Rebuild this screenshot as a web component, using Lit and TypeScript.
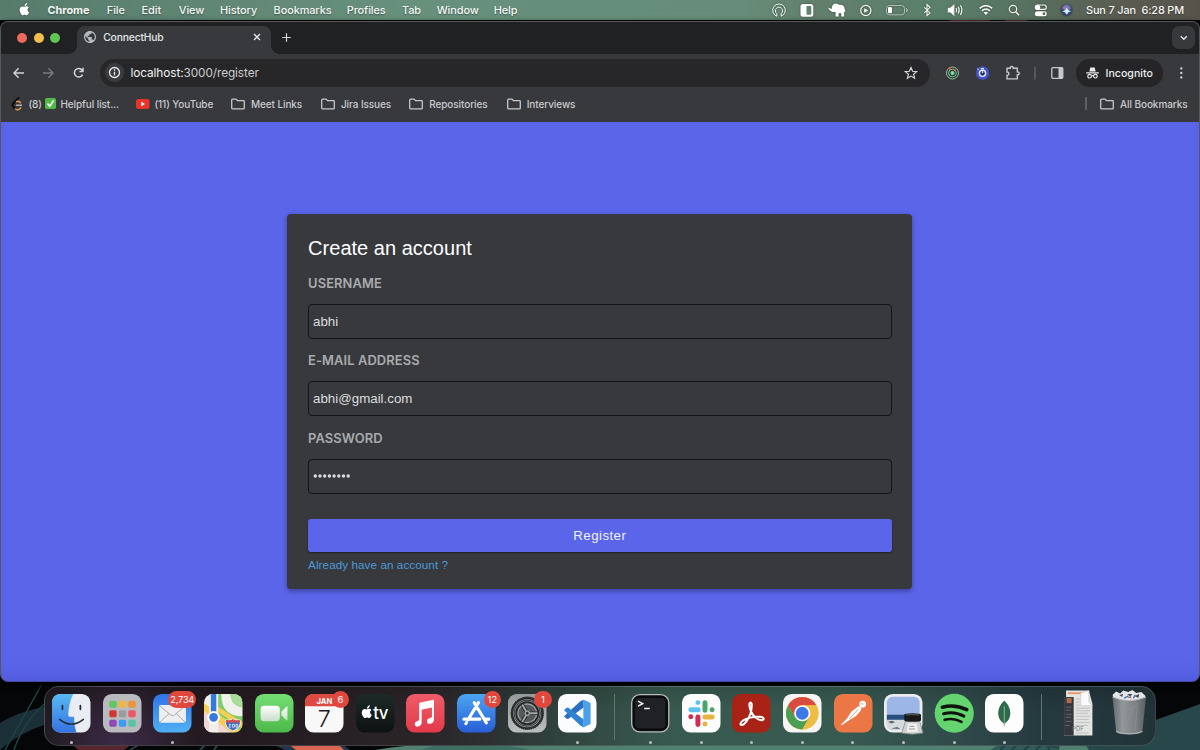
import { LitElement, html, svg, css, SVGTemplateResult } from "lit";
import { customElement, property } from "lit/decorators.js";

const APPLE =
  "M8.8 2.1c.6-.7 1-1.5.9-2.1-.8.1-1.6.5-2.1 1.1-.5.6-.9 1.400-.8 2.200.8 0 1.500-.5 2-1.200zM9.900 6.900c0-1.500 1.200-2.200 1.300-2.300-.7-1-1.800-1.200-2.200-1.200-.9-.1-1.800.6-2.300.6s-1.200-.5-2-.5c-1 0-2 .6-2.500 1.500-1.100 1.900-.3 4.600.8 6.100.5.7 1.100 1.600 1.900 1.500.8 0 1.100-.5 2-.5s1.200.5 2 .5 1.400-.7 1.900-1.500c.6-.8.8-1.700.8-1.700s-1.700-.6-1.700-2.500z";

const GLOBE =
  "M12 2C6.48 2 2 6.48 2 12s4.480 10 10 10 10-4.480 10-10S17.520 2 12 2zm-1 17.930c-3.950-.490-7-3.850-7-7.930 0-.620.080-1.210.210-1.790L9 15v1c0 1.100.900 2 2 2v1.930zm6.900-2.540c-.260-.810-1-1.390-1.900-1.390h-1v-3c0-.550-.450-1-1-1H8v-2h2c.550 0 1-.450 1-1V7h2c1.100 0 2-.900 2-2v-.410c2.930 1.190 5 4.060 5 7.410 0 2.080-.800 3.970-2.100 5.390z";

/* ---------- macOS menu bar ---------- */

@customElement("menu-bar")
export class MenuBar extends LitElement {
  static styles = css`
    :host {
      display: flex;
      justify-content: space-between;
      height: 20px;
      color: #f4f6f5;
      font: 500 10.900px/20px Inter, "Liberation Sans", sans-serif;
      letter-spacing: -0.08px;
      text-shadow: 0 0.5px 1.5px rgba(0, 0, 0, 0.4);
      background: linear-gradient(90deg, #577c6c 0, #5f8573 15%, #67917d 34%, #658d79 62%, #627f6c 68%, #5a806c 78%, #58705f 86%, #5b5a50 94%, #57534b 100%);
    }
    svg { display: block; overflow: visible; filter: drop-shadow(0 0.5px 1px rgba(0, 0, 0, 0.4)); }
    .menus { display: flex; padding-left: 17.5px; }
    .logo { width: 30px; padding-top: 2.5px; }
    .name { font-weight: 700; letter-spacing: -0.02px; }
    .w0 { width: 59.3px; }
    .w1 { width: 34.8px; }
    .w2 { width: 37.2px; }
    .w3 { width: 41.3px; }
    .w4 { width: 53.5px; }
    .w5 { width: 73.2px; }
    .w6 { width: 55.2px; }
    .w7 { width: 34.8px; }
    .w8 { width: 57px; }
    .status { display: flex; width: 429px; }
    .clock { white-space: pre; padding-left: 9px; letter-spacing: -0.14px; }
  `;
  render() {
    const menus = ["Chrome", "File", "Edit", "View", "History", "Bookmarks", "Profiles", "Tab", "Window", "Help"];
    return html`
      <div class="menus">
        <div class="logo">
          <svg width="13" height="14" viewBox="0 0 13.500 14.500"><path d=${APPLE} fill="#fff" /></svg>
        </div>
        ${menus.map((m, i) => html`<span class="w${i} ${i ? "" : "name"}">${m}</span>`)}
      </div>
      <div class="status">
        <svg width="306" height="20" viewBox="0 0 306 20" fill="none" stroke="#f2f4f3" stroke-width="1.200">
          <path d="M5.800 16.200a6.300 6.300 0 1 1 4.400 0V13.600a3.600 3.600 0 1 0-4.400 0z" stroke-width="1" />
          <rect x="29.500" y="4" width="12.800" height="12.800" rx="2.500" fill="#fff" stroke="none" />
          <path d="M35.500 6h3.800q1 0 1 1v6.800q0 1-1 1h-3.800z" fill="#60836f" stroke="none" />
          <path d="M57 7.400l3.600 1.500c.2-3.200 1.700-5.200 4-5.400 1.700 0 2.500 1 3.700 1.200 3.500-.4 5.300 1.400 5.400 4.400l.8 2.500-1 .3-.4-1v5.600h-2.800v-3.200h-2.700v3.200h-3V12c-2.800.5-6.400-.8-7.600-4.600z" fill="#fff" stroke="none" />
          <circle cx="94.800" cy="10.500" r="5.100" />
          <path d="M93.200 8.200v4.600l3.900-2.300z" fill="#fff" stroke="none" />
          <rect x="115.500" y="5.500" width="18" height="9.300" rx="3" stroke="#c0c8c2" stroke-width=".9" />
          <rect x="117" y="7" width="4" height="6.300" rx="1.200" fill="#fff" stroke="none" />
          <path d="M135 8.500q1.300.3 1.300 1.600t-1.300 1.600" stroke-width=".8" />
          <path d="M153.300 7.300l5.700 5.600-3 2.700V4.600l3 2.700-5.700 5.600" stroke-width="1.100" />
          <path d="M177.300 8.300h2.200l3.300-3v9.600l-3.300-3h-2.200z" fill="#fff" />
          <path d="M185 8q1.300 2 0 4.200M187.200 6.700q2 3.400 0 6.800M189.400 5.300q3 4.800 0 9.600" />
          <path d="M208.600 8.300q6.300-5.300 12.600 0M210.900 10.800q4-3.300 8 0" stroke-width="1.700" />
          <path d="M212.700 12.600q2.200-1.500 4.400 0l-2.200 2.300z" fill="#fff" stroke="none" />
          <circle cx="242" cy="9" r="3.700" />
          <path d="M244.700 11.800l3.400 3.500" stroke-width="1.500" />
          <rect x="264.300" y="5" width="11" height="4.400" rx="2.200" />
          <circle cx="266.700" cy="7.200" r="2.500" fill="#fff" stroke="none" />
          <rect x="263.800" y="11.200" width="12" height="5" rx="2.500" fill="#fff" stroke="none" />
          <circle cx="273" cy="13.700" r="1.400" fill="#5b665a" stroke="none" />
          <circle cx="295.500" cy="10.300" r="5.800" fill="#3a456f" stroke="none" />
          <path d="M291 9q1-4.500 5-4.300 3.500.5 4 4.500l-4 .8z" fill="#7577b5" stroke="none" />
          <path d="M291 11.500q4-1 4.500-4.500.8 3 5 4.500-3.500-.3-4.200 2.800l-1.200 0q-.6-3-4.100-2.800z" fill="#c7f2f4" stroke="none" />
          <path d="M292.500 7l2 2" stroke="#d66a8f" />
        </svg>
        <span class="clock">Sun 7 Jan  6:28 PM</span>
      </div>
    `;
  }
}

/* ---------- Chrome window frame ---------- */

@customElement("browser-window")
export class BrowserWindow extends LitElement {
  static styles = css`
    :host {
      display: flex;
      flex-direction: column;
      box-sizing: border-box;
      height: 661px;
      border-radius: 8px;
      overflow: hidden;
      background: #38393d;
      color: #dfe1e4;
      border: 1px solid #55575a;
      border-bottom-color: #4448a8;
      font: 10.5px Inter, "Liberation Sans", sans-serif;
    }
    svg { display: block; flex: none; overflow: visible; }
    .strip { display: flex; align-items: flex-start; height: 32.500px; background: #1f2123; }
    .lights { display: flex; gap: 6.600px; padding: 11px 0 0 16.300px; width: 59.700px; box-sizing: border-box; }
    .light { width: 10px; height: 10px; border-radius: 50%; flex: none; }
    .red { background: #ed6a5e; }
    .yellow { background: #f5bf4f; }
    .green { background: #61c554; }
    .foot { width: 8px; height: 8px; margin-top: 24.500px; }
    .footl { margin-left: 8px; background: radial-gradient(circle at 0 0, transparent 7.500px, #38393d 8px); }
    .footr { background: radial-gradient(circle at 100% 0, transparent 7.500px, #38393d 8px); }
    .tab {
      display: flex;
      align-items: center;
      box-sizing: border-box;
      width: 194px;
      height: 28.500px;
      margin-top: 4px;
      padding: 0 8px 5px 7.500px;
      border-radius: 8px 8px 0 0;
      background: #38393d;
      font-size: 10.300px;
      font-weight: 500;
      letter-spacing: -0.15px;
    }
    .title { flex: 1; padding-left: 7px; color: #e3e5e8; }
    .plus { margin: 10px 0 0 2px; }
    .spring { flex: 1; }
    .chev { margin: 4px 4px 0 0; width: 23.500px; height: 23.500px; border-radius: 7px; background: #38393d; }
    .bar { display: flex; align-items: center; height: 37px; padding-left: 10px; }
    .nav { width: 89px; }
    .omni {
      display: flex;
      align-items: center;
      width: 831px;
      height: 28px;
      border-radius: 14px;
      background: #272628;
      font-size: 11.800px;
      box-sizing: border-box;
      padding: 0 12.500px 0 4.500px;
      color: #c9cbce;
    }
    .url { flex: 1; padding: 1.500px 0 0 7px; letter-spacing: -0.08px; }
    .host { color: #f1f3f4; }
    .ext { width: 146px; }
    .incog {
      display: flex;
      align-items: center;
      gap: 7px;
      width: 87px;
      height: 28px;
      border-radius: 14px;
      background: #252527;
      box-sizing: border-box;
      padding: 1px 0 0 9.500px;
      color: #e8eaed;
      font-weight: 500;
      font-size: 10.600px;
      white-space: nowrap;
    }
    .marks { display: flex; align-items: center; height: 30.500px; padding: 0 11.500px 5px 10px; box-sizing: border-box; color: #c9cbce; font-size: 10px; font-weight: 500; letter-spacing: -0.09px; }
    .marks span { white-space: pre; }
    .leet { width: 14px; margin-right: 3.500px; }
    .check { margin: 0 4px 0 3.500px; }
    .first { width: 75.500px; }
    .yt { margin-right: 4.500px; }
    .ytl { width: 76.500px; }
    .fold { margin-right: 6px; }
    .meet { width: 70px; }
    .jira { width: 68.300px; }
    .repo { width: 77.500px; }
    .rule { width: 1.500px; height: 13px; background: #5f6063; margin-right: 13.500px; }
    .page { flex: 1; background: #5a65ea; display: flex; align-items: flex-start; justify-content: center; box-shadow: inset 0 -14px 14px -8px rgba(74, 80, 205, 0.5); }
  `;
  folder() {
    return html`<svg class="fold" width="14" height="12" viewBox="0 0 14 12"><path d="M.7 9.900V2q0-.9.900-.9H5L6.500 2.700h6q.8 0 .8.800v6.400q0 .9-.8.900h-11q-.8 0-.8-.9z" fill="none" stroke="#c6c9cc" stroke-width="1.300" /></svg>`;
  }
  render() {
    return html`
      <div class="strip">
        <div class="lights">
          <div class="light red"></div>
          <div class="light yellow"></div>
          <div class="light green"></div>
        </div>
        <div class="foot footl"></div>
        <div class="tab">
          <svg width="12" height="12" viewBox="2 2 20 20"><path d=${GLOBE} fill="#b6bbbe" /></svg>
          <span class="title">ConnectHub</span>
          <svg width="12" height="12" viewBox="0 0 12 12"><path d="M3 3l6 6M9 3l-6 6" stroke="#e4e6e8" stroke-width="1.400" /></svg>
        </div>
        <div class="foot footr"></div>
        <svg class="plus" width="11" height="11" viewBox="0 0 11 11"><path d="M5.500 1.200v8.600M1.200 5.500h8.600" stroke="#d3d5d8" stroke-width="1.200" /></svg>
        <div class="spring"></div>
        <svg class="chev" viewBox="0 0 23.500 23.500"><path d="M8.800 10.300l3 3 3-3" fill="none" stroke="#e4e6e8" stroke-width="1.400" /></svg>
      </div>
      <div class="bar">
        <svg class="nav" height="20" viewBox="0 0 89 20" fill="none" stroke-width="1.400">
          <path d="M13 10H3.300M7.600 5.300L3 10l4.600 4.700" stroke="#d3d5d8" />
          <path d="M32 10h9.700M37.400 5.300L42 10l-4.600 4.700" stroke="#77797c" />
          <path d="M71.200 7.200A4.300 4.300 0 1 0 71.600 11.600M72 4.800v3.600h-3.600" stroke="#d3d5d8" stroke-width="1.500" />
        </svg>
        <div class="omni">
          <svg width="19" height="19" viewBox="0 0 19 19">
            <circle cx="9.500" cy="9.500" r="9.700" fill="#3a3b3e" />
            <circle cx="9.500" cy="9.500" r="5" fill="none" stroke="#e8eaed" stroke-width="1.300" />
            <path d="M9.500 8.800v3.400M9.500 6.300v1.400" stroke="#e8eaed" stroke-width="1.300" />
          </svg>
          <span class="url"><span class="host">localhost:</span>3000/register</span>
          <svg width="14" height="14" viewBox="0 0 14 14"><path d="M7 1.500l1.600 3.800 4.100.3-3.100 2.700 1 4L7 10.100l-3.600 2.200 1-4L1.300 5.600l4.100-.3z" fill="none" stroke="#d3d5d8" stroke-width="1.200" /></svg>
        </div>
        <svg class="ext" height="28" viewBox="0 0 146 28" fill="none">
          <circle cx="22.500" cy="14" r="6" stroke="#8fbf9c" stroke-width="1" />
          <circle cx="22.500" cy="14" r="3.900" stroke="#63c98e" stroke-width="1" />
          <circle cx="22.500" cy="14" r="2" fill="#7adf9f" />
          <circle cx="19.500" cy="9.400" r="1.200" fill="#f0503c" /><circle cx="24.800" cy="11.200" r="1" fill="#f0503c" />
          <circle cx="52.500" cy="14" r="6.700" fill="#4254cf" />
          <circle cx="52.500" cy="14.300" r="3.100" fill="#202a70" stroke="#e9ecff" stroke-width="1.400" />
          <path d="M52.500 14.300v-2M51 9.600h3M48.600 10.600l-1-1" stroke="#e9ecff" stroke-width="1.200" />
          <path d="M77 9.300h3.200c-.5-2.400 3.600-2.400 3.100 0h4v3.600c2.500-.4 2.500 3.400 0 3v4H77v-3.600c2.500.3 2.500-3.600 0-3.200z" stroke="#c6c9cc" stroke-width="1.400" />
          <path d="M105 8v12.500" stroke="#5f6063" stroke-width="1.500" />
          <rect x="121.800" y="8.700" width="11" height="10.600" rx="1" stroke="#c6c9cc" stroke-width="1.300" />
          <path d="M128.500 8.700h4.300v10.600h-4.300z" fill="#c6c9cc" />
        </svg>
        <div class="incog">
          <svg width="13" height="12" viewBox="0 0 13 12">
            <path d="M3.300 4.600L4.300.8q.2-.7.900-.5l1.300.4L7.800.3q.7-.2.900.5l1 3.800zM.2 5.300h12.600v1.100H.2z" fill="#e8eaed" />
            <g fill="none" stroke="#e8eaed" stroke-width="1.200"><circle cx="3.600" cy="9.200" r="1.800" /><circle cx="9.400" cy="9.200" r="1.800" /><path d="M5.400 9q1.100-.8 2.200 0" /></g>
          </svg>
          Incognito
        </div>
        <svg width="36" height="14" viewBox="0 0 36 14" fill="#d3d5d8"><circle cx="18.300" cy="2.500" r="1.150" /><circle cx="18.300" cy="7" r="1.150" /><circle cx="18.300" cy="11.500" r="1.150" /></svg>
      </div>
      <div class="marks">
        <svg class="leet" height="14" viewBox="0 0 14 14" fill="none" stroke-linecap="round">
          <path d="M7.500 1L2 6.500Q1 8 2 9.500l2.500 2.500" stroke="#08090a" stroke-width="1.900" />
          <path d="M4.500 12q2 1.500 4 0l1.300-1.300M5.500 4.600q1.700-1 3 .2l1 1" stroke="#e8a04a" stroke-width="1.500" />
          <path d="M5.500 8.200h5" stroke="#b3b5b8" stroke-width="1.400" />
        </svg>
        <span>(8)</span>
        <svg class="check" width="11" height="11" viewBox="0 0 11 11"><rect width="11" height="11" rx="1.800" fill="#4fbb45" /><path d="M2.500 5.500l2.300 2.700L8.700 2.300" fill="none" stroke="#fff" stroke-width="1.500" /></svg>
        <span class="first">Helpful list...</span>
        <svg class="yt" width="14" height="10" viewBox="0 0 14 10"><rect width="13.500" height="10" rx="2.200" fill="#e8352b" /><path d="M5.300 2.800v4.400L9 5z" fill="#fff" /></svg>
        <span class="ytl">(11) YouTube</span>
        ${this.folder()}<span class="meet">Meet Links</span>
        ${this.folder()}<span class="jira">Jira Issues</span>
        ${this.folder()}<span class="repo">Repositories</span>
        ${this.folder()}<span>Interviews</span>
        <div class="spring"></div>
        <div class="rule"></div>
        ${this.folder()}<span>All Bookmarks</span>
      </div>
      <div class="page"><slot></slot></div>
    `;
  }
}

/* ---------- Registration form ---------- */

@customElement("register-form")
export class RegisterForm extends LitElement {
  static styles = css`
    :host {
      display: block;
      box-sizing: border-box;
      width: 625px;
      height: 375px;
      margin: 92.500px 0.400px 0 0;
      padding: 21px 20.800px;
      border-radius: 4px;
      background: #38393d;
      box-shadow: 0 2px 5px rgba(20, 20, 60, 0.45);
      font: 13.330px "Liberation Sans", Arial, sans-serif;
      color: #dcddde;
    }
    h1 { margin: 0; font-weight: 400; font-size: 20px; line-height: 26px; color: #fff; letter-spacing: 0.02px; }
    label { display: block; height: 33.500px; padding-top: 10.500px; font: 600 12.900px/23px Inter, "Liberation Sans", sans-serif; letter-spacing: 0.1px; color: #a8abad; box-sizing: border-box; }
    .field { height: 77.500px; }
    .box { display: flex; align-items: center; box-sizing: border-box; height: 35px; margin-top: 9px; padding: 0 3.900px; border: 1px solid #131416; border-radius: 4px; }
    .dots { display: block; }
    .btn { display: block; width: 100%; height: 33.500px; margin-top: 25px; padding: 0; border: 0; border-radius: 3px; background: #5a65ea; color: #f1f2ff; font: inherit; letter-spacing: 0.420px; box-shadow: 0 1px 2px rgba(0, 0, 0, 0.5); }
    .link { display: block; margin-top: 3.800px; color: #4b9adb; font-size: 11.670px; line-height: 18px; letter-spacing: 0.080px; }
  `;
  render() {
    return html`
      <h1>Create an account</h1>
      <div class="field"><label>USERNAME</label><div class="box">abhi</div></div>
      <div class="field"><label>E-MAIL ADDRESS</label><div class="box">abhi@gmail.com</div></div>
      <div class="field">
        <label>PASSWORD</label>
        <div class="box">
          <svg class="dots" width="38" height="4" viewBox="0 0 38 4" fill="#dcddde">
            ${Array.from({ length: 8 }, (_, i) => svg`<circle cx=${2.3 + i * 4.7} cy="2" r="1.700" />`)}
          </svg>
        </div>
      </div>
      <button class="btn">Register</button>
      <a class="link">Already have an account ?</a>
    `;
  }
}

/* ---------- Dock ---------- */

interface App {
  art: SVGTemplateResult;
  running?: boolean;
  badge?: string;
}

const tile = (fill: string) => svg`<rect width="38" height="38" rx="8.500" fill=${fill} />`;

const LEFT: App[] = [
  {
    running: true,
    art: svg`
      <defs><linearGradient id="fi" x2="0" y2="1"><stop stop-color="#58b9f3"/><stop offset="1" stop-color="#3572e2"/></linearGradient></defs>
      ${tile("#e9edf3")}
      <path d="M8.500 0H21q-4.500 9-5 20.500 0 2 1.500 2h4.300Q21.500 31 24 38H8.500Q0 38 0 29.500v-21Q0 0 8.500 0z" fill="url(#fi)"/>
      <path d="M10.300 11.500v3.600M28 11.500v3.600" stroke="#1d2935" stroke-width="1.700" stroke-linecap="round"/>
      <path d="M7.500 25q11.500 9.500 23.500 0" fill="none" stroke="#1d2935" stroke-width="1.400" stroke-linecap="round"/>`,
  },
  {
    art: svg`${tile("#b9babd")}${[
      "#5fc85d", "#f2b73c", "#f09336", "#d3372f", "#9a9da0", "#ef5666", "#9148b5", "#3b9cf3", "#58c2a5",
    ].map((c, i) => svg`<rect x=${6.2 + (i % 3) * 9.4} y=${6.6 + Math.floor(i / 3) * 9.4} width="7.300" height="6.900" rx="1.600" fill=${c}/>`)}`,
  },
  {
    running: true,
    badge: "2,734",
    art: svg`
      <defs><linearGradient id="ml" x2="0" y2="1"><stop stop-color="#2f74e8"/><stop offset="1" stop-color="#4fb1f3"/></linearGradient></defs>
      ${tile("url(#ml)")}
      <rect x="6" y="10.800" width="26.500" height="17.500" rx="1.800" fill="#eeeeee"/>
      <path d="M6.500 11.500l11 9.300q1.800 1.400 3.600 0l11-9.300M6.800 27.800l9-8.500M31.800 27.800l-9-8.500" fill="none" stroke="#a1a5aa" stroke-width=".9"/>`,
  },
  {
    art: svg`
      <defs><clipPath id="mc"><rect width="38" height="38" rx="8.500"/></clipPath></defs>
      <g clip-path="url(#mc)">
        <rect width="38" height="38" fill="#f0f0ea"/>
        <path d="M12 0h26v38H12z" fill="#7fcc6c"/>
        <path d="M17 0q0 22 21 22V13Q27 12 26 0z" fill="#f1f1ec"/>
        <path d="M26 0q1 12 12 13V0z" fill="#a9dc9b"/>
        <path d="M0 9l38 29H27L0 18z" fill="#f7cf4f"/><path d="M0 17l27 21H0z" fill="#f2d6d6"/>
        <path d="M13 17l25 17v-6L13 12z" fill="#f7cf4f"/>
        <path d="M5 0h9v38H5z" fill="#efefec"/><path d="M6.800 0h5.300v20H6.800z" fill="#3478e0"/>
        <circle cx="9.500" cy="23" r="6.200" fill="#fff"/><circle cx="9.500" cy="23" r="4.300" fill="#3478e0"/>
        <path d="M21.500 25.500q3.500 1 7-.8 3.500 1.800 7 .8 2 7.500-7 11-9-3.500-7-11z" fill="#3d6fc7" stroke="#fff" stroke-width=".8"/>
        <path d="M21.800 25.700q3.500 1 6.700-.8 3.300 1.800 6.700.8l.3 2.500H21.500z" fill="#db4a43"/>
        <path d="M24.500 30h1.700l-1.700 2.700h2M28 30h2v2.700h-2zM31.500 30h1.800v2.700h-1.800z" fill="none" stroke="#fff" stroke-width=".7"/>
      </g>`,
  },
  {
    art: svg`
      <defs><linearGradient id="ft" x2="0" y2="1"><stop stop-color="#74de72"/><stop offset="1" stop-color="#4cb94a"/></linearGradient>
      <linearGradient id="fw" x2="0" y2="1"><stop stop-color="#fff"/><stop offset="1" stop-color="#c9ddc8"/></linearGradient></defs>
      ${tile("url(#ft)")}
      <rect x="5.500" y="11.500" width="19" height="15.500" rx="3.500" fill="url(#fw)"/>
      <path d="M26 17.500l5-5q1-.8 1 .5v12.500q0 1.300-1 .5l-5-5z" fill="url(#fw)"/>`,
  },
  {
    badge: "6",
    art: svg`
      ${tile("#f8f8f8")}<path d="M0 12V8.500Q0 0 8.500 0h21Q38 0 38 8.500V12z" fill="#dd4a40"/>
      <text x="11.300" y="9.800" font-family="Inter" font-weight="700" font-size="7.600" fill="#fff">JAN</text>
      <text x="12.600" y="32.300" font-family="Inter" font-weight="300" font-size="23" fill="#1c1c1c">7</text>`,
  },
  {
    art: svg`
      <defs><linearGradient id="tv" x2="0" y2="1"><stop stop-color="#1c2b27"/><stop offset="1" stop-color="#0e1113"/></linearGradient></defs>
      ${tile("url(#tv)")}
      <path transform="translate(4 11.200)" d=${APPLE} fill="#fff"/>
      <text x="17" y="25" font-family="Inter" font-weight="500" font-size="16.500" letter-spacing="-.5" fill="#fff">tv</text>`,
  },
  {
    art: svg`
      <defs><linearGradient id="mu" x2="0" y2="1"><stop stop-color="#ee5c69"/><stop offset="1" stop-color="#e33a4b"/></linearGradient></defs>
      ${tile("url(#mu)")}
      <path d="M13 9.700q0-1 1-1.300l12.300-2.600q1.300-.2 1.300 1V25q0 3.800-3.600 4.300-3.300.3-3.300-2.500 0-2.500 3-3 1.900-.3 1.900-1.500v-9l-10.200 2.200V28q0 3.700-3.600 4.200-3.200.2-3.200-2.600 0-2.400 2.700-2.900 1.700-.3 1.700-1.500z" fill="#fff"/>`,
  },
  {
    badge: "12",
    art: svg`
      <defs><linearGradient id="as" x2="0" y2="1"><stop stop-color="#4ba5f2"/><stop offset="1" stop-color="#285ed6"/></linearGradient></defs>
      ${tile("url(#as)")}
      <g stroke="#fff" stroke-width="3" stroke-linecap="round"><path d="M21.200 8.500L10.800 25.500M17 8.500l12 20M6.800 24.800h15.700M27.500 24.800h4M9.300 28.300l-.6 1"/></g>`,
  },
  {
    badge: "1",
    art: svg`
      <defs><linearGradient id="se" x2="0" y2="1"><stop stop-color="#95999a"/><stop offset="1" stop-color="#babebe"/></linearGradient></defs>
      ${tile("url(#se)")}
      <circle cx="19" cy="19" r="15" fill="none" stroke="#2b2e2f" stroke-width="2.400"/>
      <circle cx="19" cy="19" r="16" fill="none" stroke="#2b2e2f" stroke-width="1" stroke-dasharray="1 1"/>
      <circle cx="19" cy="19" r="13" fill="#8b8f90" stroke="#202324" stroke-width=".8"/>
      <circle cx="19" cy="19" r="11" fill="#3a3d3e" stroke="#26292a" stroke-width="1.600"/>
      <circle cx="19" cy="19" r="9.300" fill="#55595a" stroke="#a4a7a8" stroke-width="1.200"/>
      <path d="M19 19H29M19 19l-5-8.700M19 19l-5 8.700" stroke="#26292a" stroke-width="3.600"/>
      <path d="M19 19H29M19 19l-5-8.700M19 19l-5 8.700" stroke="#a4a7a8" stroke-width="1.800"/>
      <circle cx="19" cy="19" r="2" fill="#303334" stroke="#a4a7a8" stroke-width="1.200"/>`,
  },
  {
    running: true,
    art: svg`
      ${tile("#fbfcfd")}
      <path d="M24.800 6l-3 1.500L6 22l2 2.300 2 .4L25.500 13z" fill="#2b6fc0"/>
      <path d="M24.800 32.300l-3-1.500L6 16l2-2.300 2-.4L25.500 25.500z" fill="#2f83d3"/>
      <path d="M25.300 5.700l6 2.700q.9.400.9 1.400v19q0 1-.9 1.400l-6 2.700q-1.500.2-2.300-1.200 1.800.4 2-1.600V8.300q-.2-2-2-1.600.8-1.200 2.300-1z" fill="#4ba0ea"/>`,
  },
];

const MID: App[] = [
  {
    running: true,
    art: svg`
      <rect x=".7" y=".7" width="36.600" height="36.600" rx="8" fill="#0a0b0c" stroke="#b8bcbb" stroke-width="1.300"/>
      <rect x="4" y="4" width="30" height="30" rx="4" fill="#202124"/>
      <path d="M7 7l4.500 2.500L7 12M13 14.300h5.500" fill="none" stroke="#f1f1f1" stroke-width="1.500"/>`,
  },
  {
    running: true,
    art: svg`
      ${tile("#fcfcfc")}
      <g stroke-width="4.900" stroke-linecap="round">
        <path d="M8.700 15.500h7.300M15.700 8.500h0" stroke="#5fc3ef"/><path d="M22.700 8.700V16M29.700 15.500h0" stroke="#4ba36d"/>
        <path d="M22.500 22.700h7.300M22.700 29.700h0" stroke="#e8b43f"/><path d="M15.700 22.700V30M8.700 22.500h0" stroke="#d32c51"/>
      </g>`,
  },
  {
    running: true,
    art: svg`
      ${tile("#a82316")}
      <path d="M18.300 8.500c-2 0-1.200 5 .7 9.300 2 4.300 6.500 8 10.500 8 2.600 0 2.400-3-1.500-3.400-6-.3-12 .8-16.500 3.500-3.800 2.300-3.800 4.700-1.900 4.700 3 0 7-6.300 8.600-11.300C19.600 14.500 20.200 8.500 18.300 8.500z" fill="none" stroke="#fff" stroke-width="2"/>`,
  },
  {
    running: true,
    art: svg`
      ${tile("#f5f5f3")}
      <circle cx="19" cy="19" r="16" fill="#e5b640"/>
      <path d="M5.140 11a16 16 0 0 1 27.720 0H19L12 23z" fill="#d84b3e"/>
      <path d="M5.140 11A16 16 0 0 0 19 35l7-12H12z" fill="#4a9f55"/>
      <path d="M19 35a16 16 0 0 0 13.860-24H19l7 12z" fill="#efbd42"/>
      <circle cx="19" cy="19" r="8" fill="#fff"/><circle cx="19" cy="19" r="6.300" fill="#3c79e6"/>`,
  },
  {
    running: true,
    art: svg`
      ${tile("#ec7746")}
      <circle cx="28.300" cy="10" r="3.300" fill="#fff"/>
      <path d="M23.500 12.500q2-1 3.300.8.600 1.500-.8 3.700L21.500 22l-6 3.500-7.800 5.300q-1 0-.4-1L13 24l4-6.500z" fill="#fff"/>
      <path d="M15 24.500l9-9.500M26.500 9.500l2.500.6" stroke="#df7550" stroke-width=".7" fill="none"/>`,
  },
  {
    running: true,
    art: svg`
      <rect x="0" y="0" width="38" height="38" rx="8.500" fill="#ececec"/>
      <rect x="2.800" y="2.800" width="32.400" height="32.400" rx="5.500" fill="#9db6e8"/>
      <path d="M2.800 20.500h32.400v6H2.800z" fill="#294d7d"/><path d="M2.800 25.500h32.400v4.300q0 5.400-5.500 5.400H8.300q-5.500 0-5.500-5.400z" fill="#d3dbe1"/>
      <path d="M4 27.500l4-1 3 1.500-4 1zM7 34l6-1.500 3 2z" fill="#5c666c"/>
      <path d="M21.500 26h13.500l3.500 12.500q-10.500 2.300-21 0z" fill="#cfd1cf" stroke="#7f8382" stroke-width=".7"/>
      <path d="M23.500 29h9l1 8.500h-11z" fill="#eff0ee"/><path d="M25 32h5M24.500 34.500h6" stroke="#777" stroke-width=".7"/>
      <path d="M20 20.500q0-1.500 8-1.500t8.500 1.500V26q0 1.500-8.300 1.500T20 26z" fill="#17191b"/><path d="M21.500 20.800q6.500-1 13.500 0" fill="none" stroke="#5c6061"/>`,
  },
  {
    running: true,
    art: svg`
      <circle cx="19" cy="19" r="19.300" fill="#64d56e"/>
      <g fill="none" stroke="#10140f" stroke-linecap="round"><path d="M7.300 13q12.500-3.200 24 2.500" stroke-width="3.600"/><path d="M8.500 19.500q10.500-2.800 20 2.300" stroke-width="3"/><path d="M9.500 25.500q9-2.300 16.700 2" stroke-width="2.500"/></g>`,
  },
  {
    running: true,
    art: svg`
      ${tile("#fcfdfc")}
      <path d="M19 6.500q6 6 6 12.500 0 6.500-5.500 10l-.5 3-.5-3Q13 25.500 13 19q0-6.500 6-12.500z" fill="#2d6a4a"/>
      <path d="M19 12v20" stroke="#a5c2a7" stroke-width=".8"/>`,
  },
];

const RIGHT: App[] = [
  {
    art: svg`
      <path d="M6-3.500h22.500L32 9.500V41H4V3h2z" fill="#e3e4e2"/>
      <path d="M4 3h9.500v38H4z" fill="#34373c"/><rect x="6.500" y="4" width="5" height="5" fill="#b06a45"/>
      <path d="M8-.8h18" stroke="#e89568" stroke-width="1.800"/>
      <path d="M20.500-1v12.500H32L28.500 8V-3.500z" fill="#fafafa" stroke="#bcbcba" stroke-width=".5"/>
      <path d="M15.500 5h4M15.500 8h4M15.500 11h4M15.500 14h14M15.500 16.500h14M15.500 19h12M15.500 22h14M15.500 25h13M15.500 28h14M15.500 31h12M15.500 38.500h13" stroke="#b6b8b8" stroke-width=".8"/>
      <path d="M5.500 13h6M5.500 16h5M5.500 20h6M5.500 23h5M5.500 27h6M5.500 31h4" stroke="#70747a" stroke-width=".8"/>
      <text x="12" y="37" font-family="Inter" font-size="5.800" fill="#77797a">PDF</text>`,
  },
  {
    art: svg`
      <defs><linearGradient id="tr"><stop stop-color="#666b6d"/><stop offset=".3" stop-color="#929698"/><stop offset=".7" stop-color="#7c8183"/><stop offset="1" stop-color="#5a5f62"/></linearGradient></defs>
      <path d="M2.500 1l3.500-3.500 4 2 3-3 5 1.500 4-2 4 3 5-1 4 4-2.500 5H5z" fill="#e5e7e8"/>
      <path d="M9 1l3 2 1-3zM17 0l3 3 2-3zM24 2l4 2 1-4z" fill="#4b5155"/><path d="M14 4l4-2M23 4l2-3" stroke="#3c79b4" stroke-width="1.400"/><path d="M18 3l3 1" stroke="#c4473c"/>
      <path d="M2.500 3q16.500 7 33 0L32 37q-.4 3-13 3T6 37z" fill="url(#tr)"/>
      <path d="M2.500 3q16.500 7 33 0" fill="none" stroke="#b6babc" stroke-width="1"/>
      <path d="M10 9l3 27M18 16l10-6M24 12l-8 17M27 9l-2 27" stroke="#a2a6a8" stroke-width=".7" opacity=".4"/>
      <path d="M6 37q13 4.500 26 0" fill="none" stroke="#b0b4b6" stroke-width="1"/>`,
  },
];

@customElement("app-icon")
export class AppIcon extends LitElement {
  static styles = css`
    :host { display: flex; flex-direction: column; align-items: center; width: 50.600px; padding-top: 7.300px; box-sizing: border-box; position: relative; }
    svg { display: block; overflow: visible; flex: none; }
    .badge {
      position: absolute;
      top: 3.500px;
      right: 0.5px;
      box-sizing: border-box;
      min-width: 17.500px;
      height: 17.500px;
      padding: 0 3px;
      border-radius: 9px;
      background: #e0483d;
      color: #fff;
      font: 9.500px/17.500px Inter, "Liberation Sans", sans-serif;
      letter-spacing: -0.1px;
      text-align: center;
    }
    .wide { right: 1.5px; padding: 0 2px; min-width: 28.500px; font-size: 9.200px; letter-spacing: -0.2px; }
    .run { width: 3px; height: 3px; margin-top: 8px; border-radius: 50%; background: #b9bfbc; }
  `;
  @property({ attribute: false }) app!: App;
  render() {
    const { art, badge, running } = this.app;
    return html`
      <svg width="38.500" height="38.500" viewBox="0 0 38 38">${art}</svg>
      ${running ? html`<div class="run"></div>` : ""}
      ${badge ? html`<div class="badge ${badge.length > 2 ? "wide" : ""}">${badge}</div>` : ""}
    `;
  }
}

@customElement("app-dock")
export class AppDock extends LitElement {
  static styles = css`
    :host {
      display: flex;
      box-sizing: border-box;
      width: 1112.500px;
      height: 60px;
      padding-left: 1.700px;
      border: 1px solid rgba(150, 165, 160, 0.28);
      border-radius: 15px;
      background:
        radial-gradient(circle at 75px 62px, rgba(72, 48, 88, 0.75) 0, rgba(72, 48, 88, 0) 75px),
        linear-gradient(180deg, rgba(0, 0, 0, 0.12), rgba(40, 90, 75, 0) 40%),
        linear-gradient(90deg, #211c22 0, #241b21 18%, #2a2427 34%, #2d3032 40%, #30453f 47%, #38594f 56%, #375a50 72%, #304b4a 82%, #24393f 90%, #223438 100%);
    }
    .rule { width: 1px; height: 46px; margin-top: 6.500px; background: #60756e; }
    .a { margin-left: 11px; margin-right: 10.500px; }
    .b { margin-left: 11.300px; margin-right: 11.300px; }
  `;
  render() {
    const list = (apps: App[]) => apps.map((a) => html`<app-icon .app=${a}></app-icon>`);
    return html`${list(LEFT)}<div class="rule a"></div>${list(MID)}<div class="rule b"></div>${list(RIGHT)}`;
  }
}

/* ---------- Desktop ---------- */

@customElement("app-root")
export class AppRoot extends LitElement {
  static styles = css`
    :host { display: grid; grid-template: 750px / 1200px; overflow: hidden; background: #050607; }
    .wall, .desk { grid-area: 1 / 1; }
    .wall { display: block; }
    .desk { display: flex; flex-direction: column; z-index: 1; }
    browser-window { margin-top: 0.500px; box-shadow: 0 2px 6px #000; }
    app-dock { align-self: flex-start; margin: 4.500px 0 0 43.500px; }
  `;
  render() {
    return html`
      <svg class="wall" width="1200" height="750" viewBox="0 0 1200 750">
        <defs><linearGradient id="sh" x2="0" y2="1"><stop stop-color="#030405" /><stop offset="1" stop-color="#030405" stop-opacity="0" /></linearGradient></defs>
        <rect width="1200" height="750" fill="#050607" />
        <path d="M0 723Q20 710 60 704v16Q22 730 0 750z" fill="#1b2f38" />
        <path d="M5 750L42 684M14 750q10-30 33-48" stroke="#1d4444" stroke-width="1.500" fill="none" />
        <path d="M72 744h60l-8 6H78z" fill="#58262e" />
        <path d="M130 750l10-6M200 750l6-6M214 750l4-6M345 750l-8-6" stroke="#27424a" stroke-width="2" />
        <path d="M272 744h70l8 6h-65z" fill="#253548" /><path d="M288 744h50l6 6h-48z" fill="#d96550" />
        <path d="M375 750q35-7 95-6h590l100 6z" fill="#4f8070" />
        <path d="M440 744q60-2 90 6h-110z" fill="#3c6e62" />
        <path d="M990 750l10-6h55l25 6z" fill="#315b5a" />
        <path d="M1040 744q60-6 110-22l50-18v46H1060z" fill="#27474b" />
        <path d="M1000 750l6-6M1012 750l5-6M1024 750l7-6M1036 750l6-6M1050 750l-4-6" stroke="#244245" stroke-width="2" />
        <path d="M1060 744h25l4 6h-30z" fill="#4f8070" />
        <rect y="678" width="1200" height="14" fill="url(#sh)" />
        <path d="M950 20.500h40M1005 20.500h22" stroke="#5a2826" />
      </svg>
      <div class="desk">
        <menu-bar></menu-bar>
        <browser-window><register-form></register-form></browser-window>
        <app-dock></app-dock>
      </div>
    `;
  }
}
